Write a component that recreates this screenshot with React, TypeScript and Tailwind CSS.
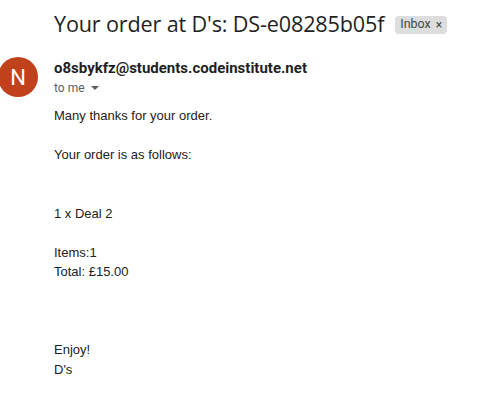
import React from 'react';

const bodyLines: string[] = [
    'Many thanks for your order.',
    '',
    'Your order is as follows:',
    '',
    '',
    '1 x Deal 2',
    '',
    'Items:1',
    'Total: £15.00',
    '',
    '',
    '',
    'Enjoy!',
    "D's",
];

export default function App() {
    return (
        <div className="w-[492px] h-[410px] bg-white overflow-hidden">
            <div className="flex items-center pl-[54px] pt-[8px] h-[40px]">
                <h2 className="text-[21.6px] leading-[28px] text-[#1f1f1f] font-['Open_Sans',sans-serif] tracking-[-0.15px]">
                    Your order at D's: DS-e08285b05f
                </h2>
                <span className="ml-[11px] mt-[1px] flex items-center gap-[5px] rounded-[4px] bg-[#dddddd] px-[5px] h-[18px] text-[12.5px] text-[#444746] font-['Roboto',sans-serif]">
                    Inbox
                    <span className="text-[12px] leading-none">×</span>
                </span>
            </div>

            <div className="flex gap-4 mt-[17px] -ml-[2px]">
                <div className="w-10 h-10 shrink-0 rounded-full bg-[#c0411b] flex items-center justify-center text-white text-[22px] font-['Roboto',sans-serif]">
                    N
                </div>
                <div className="flex-1">
                    <div className="text-[15px] leading-[20px] font-bold text-[#1f1f1f] font-['Roboto',sans-serif] mt-[1px]">
                        o8sbykfz@students.codeinstitute.net
                    </div>
                    <div className="flex items-center gap-[6px] text-[12px] leading-[20px] text-[#5e5e5e] font-['Roboto',sans-serif]">
                        to me
                        <svg width="8" height="5" viewBox="0 0 8 5" className="mt-[1px]">
                            <path d="M0 0 L8 0 L4 4 Z" fill="#5e5e5e" />
                        </svg>
                    </div>
                    <div className="mt-[8px] text-[13px] leading-[19.5px] text-[#222222] font-['Liberation_Sans',Arial,sans-serif]">
                        {bodyLines.map((line, i) => (
                            <div key={i} className="h-[19.5px]">{line}</div>
                        ))}
                    </div>
                </div>
            </div>
        </div>
    );
}
